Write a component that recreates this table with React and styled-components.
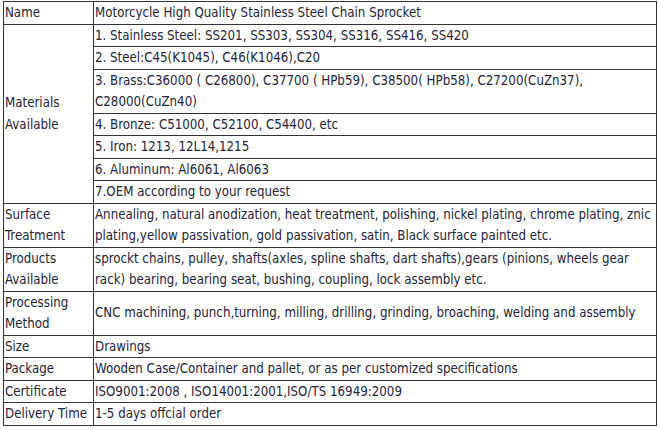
import React from 'react';
import styled, { createGlobalStyle } from 'styled-components';

const GlobalStyle = createGlobalStyle`
  html, body {
    margin: 0;
    padding: 0;
    background: #ffffff;
  }
`;

const Page = styled.div`
  padding: 1px 1px 0 3px;
  font-family: "DejaVu Sans Condensed", "DejaVu Sans", sans-serif;
  font-size: 13.2px;
  color: #24243a;
`;

const Table = styled.table`
  border-collapse: collapse;
  width: 654px;
  table-layout: fixed;
`;

const Cell = styled.td`
  border: 1px solid #333333;
  padding: 0 1px;
  line-height: 21.5px;
  vertical-align: middle;
  width: ${(p) => (p.$label ? '87px' : 'auto')};
`;

const materials = [
  '1. Stainless Steel: SS201, SS303, SS304, SS316, SS416, SS420',
  '2. Steel:C45(K1045), C46(K1046),C20',
  '3. Brass:C36000 ( C26800), C37700 ( HPb59), C38500( HPb58), C27200(CuZn37), C28000(CuZn40)',
  '4. Bronze: C51000, C52100, C54400, etc',
  '5. Iron: 1213, 12L14,1215',
  '6. Aluminum: Al6061, Al6063',
  '7.OEM according to your request',
];

const rows = [
  ['Surface Treatment', 'Annealing, natural anodization, heat treatment, polishing, nickel plating, chrome plating, znic plating,yellow passivation, gold passivation, satin, Black surface painted etc.'],
  ['Products Available', 'sprockt chains, pulley, shafts(axles, spline shafts, dart shafts),gears (pinions, wheels gear rack) bearing, bearing seat, bushing, coupling, lock assembly etc.'],
  ['Processing Method', 'CNC machining, punch,turning, milling, drilling, grinding, broaching, welding and assembly'],
  ['Size', 'Drawings'],
  ['Package', 'Wooden Case/Container and pallet, or as per customized specifications'],
  ['Certificate', 'ISO9001:2008 , ISO14001:2001,ISO/TS 16949:2009'],
  ['Delivery Time', '1-5 days offcial order'],
];

export default function App() {
  return (
    <>
      <GlobalStyle />
      <Page>
        <Table>
          <tbody>
            <tr>
              <Cell $label>Name</Cell>
              <Cell>Motorcycle High Quality Stainless Steel Chain Sprocket</Cell>
            </tr>
            {materials.map((m, i) => (
              <tr key={m}>
                {i === 0 && (
                  <Cell $label rowSpan={materials.length}>
                    Materials Available
                  </Cell>
                )}
                <Cell>{m}</Cell>
              </tr>
            ))}
            {rows.map(([label, value]) => (
              <tr key={label}>
                <Cell $label>{label}</Cell>
                <Cell>{value}</Cell>
              </tr>
            ))}
          </tbody>
        </Table>
      </Page>
    </>
  );
}
